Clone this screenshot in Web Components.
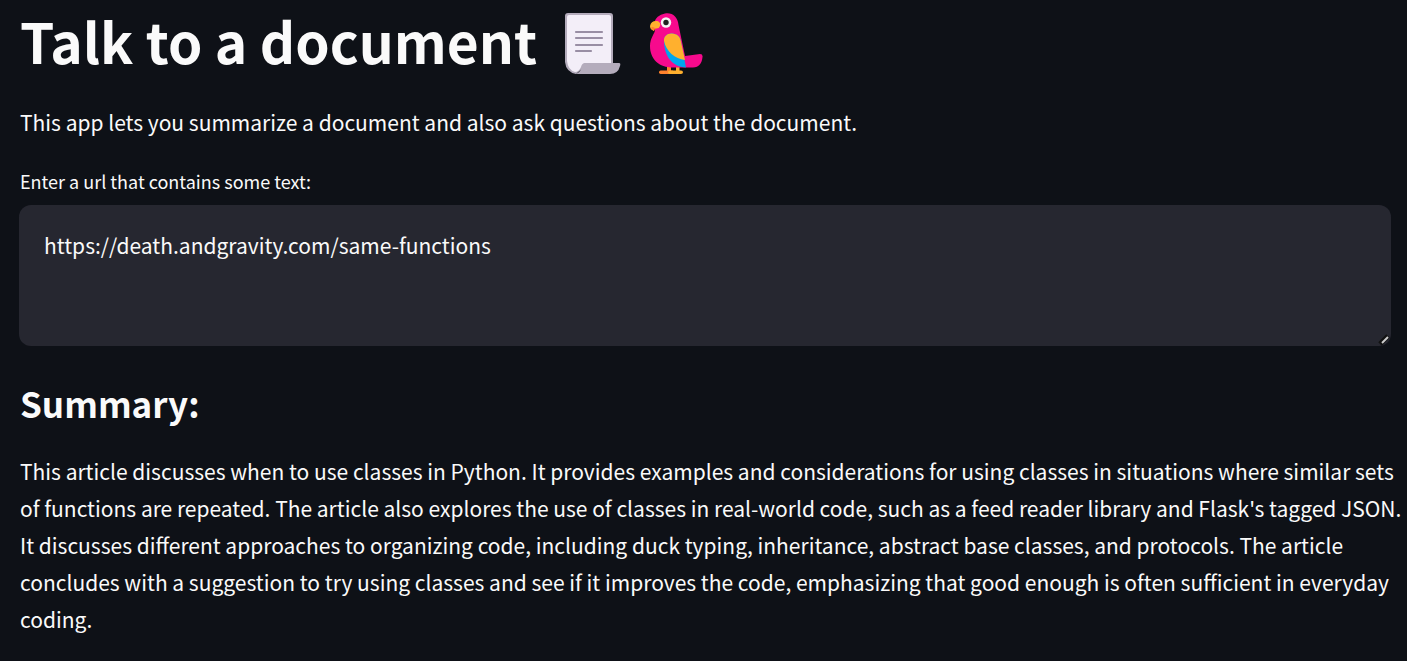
<!DOCTYPE html>
<html lang="en">
<head>
<meta charset="utf-8">
<meta name="viewport" content="width=device-width, initial-scale=1">
<title>Talk to a document</title>
<style>
html { background: #0e1117; color-scheme: dark; }
body { margin: 0; color: #fafafa; font: 400 21px/37px "Source Sans Pro", "Noto Sans CJK SC", "Noto Sans", sans-serif; }
</style>
</head>
<body>
<doc-app>
  <doc-title slot="title">Talk to a document<scroll-icon slot="icons"></scroll-icon><parrot-icon slot="icons"></parrot-icon></doc-title>
  <doc-text>This app lets you summarize a document and also ask questions about the document.</doc-text>
  <url-field label="Enter a url that contains some text:" value="https://death.andgravity.com/same-functions"></url-field>
  <doc-section heading="Summary:">
    <doc-text>This article discusses when to use classes in Python. It provides examples and considerations for using classes in situations where similar sets of functions are repeated. The article also explores the use of classes in real-world code, such as a feed reader library and Flask's tagged JSON. It discusses different approaches to organizing code, including duck typing, inheritance, abstract base classes, and protocols. The article concludes with a suggestion to try using classes and see if it improves the code, emphasizing that good enough is often sufficient in everyday coding.</doc-text>
  </doc-section>
</doc-app>
<script>
const define = (name, html, setup) => customElements.define(name, class extends HTMLElement {
  constructor() {
    super();
    this.attachShadow({ mode: "open" }).innerHTML = html;
  }
  connectedCallback() { if (setup) setup(this, this.shadowRoot); }
});

define("doc-app", `
<style>
:host { display: block; }
main { padding: 8px 16px 20px 19px; }
</style>
<main><slot name="title"></slot><slot></slot></main>`);

define("doc-title", `
<style>
:host { display: block; margin-bottom: 24px; }
h1 { display: flex; align-items: flex-start; min-height: 72px; margin: 0; padding-left: 1px; font-size: 55px; line-height: 64px; font-weight: 700; }
.icons { display: flex; align-self: center; gap: 28px; margin-left: 27px; }
</style>
<h1><span><slot></slot></span><span class="icons"><slot name="icons"></slot></span></h1>`);

define("scroll-icon", `
<style>:host { display: block; } svg { display: block; }</style>
<svg width="58" height="62" viewBox="0 0 58 62" aria-hidden="true">
  <path d="M4 0H46Q49 0 49 3V54H20L12 61Q2 59 1 49V3Q1 0 4 0Z" fill="#b4acbc"/>
  <path d="M5 2H45Q47 2 47 4V50H21Q18 50 17 54Q15 59 11 59Q4 57 3 48V4Q3 2 5 2Z" fill="#f3eef8"/>
  <path d="M22 50H55Q57 50 56 53Q54 61 46 61H11Q16 60 18 54Q19 50 22 50Z" fill="#b4acbc"/>
  <path d="M12 19H38M12 25H38M12 32H38M12 38H27" stroke="#998ea4" stroke-width="2.2" stroke-linecap="round"/>
</svg>`);

define("parrot-icon", `
<style>:host { display: block; } svg { display: block; }</style>
<svg width="54" height="62" viewBox="0 0 54 62" aria-hidden="true">
  <path d="M17 52H21V58H17Z" fill="#ff822d"/>
  <rect x="9" y="57.5" width="15" height="3.5" rx="1.7" fill="#ff822d"/>
  <path d="M26 52H29.500V57.500H31Q33 57.500 33 59.300Q33 61 31 61H20Q18 61 18 59.300Q18 57.500 20 57.500H26Z" fill="#ffb02e"/>
  <path d="M15 0.500C22 -1 28 4 28.500 12L35 43L50 41Q53 41 52.500 44C52 50 49 54.500 43 54.500H23C9 54.500 0 46 0 33C0 25 5 20 5 17L4 10Q6 2 15 0.500Z" fill="#f70a8d"/>
  <path d="M14 27C14 23 18 20 22 20.500C27 21 30 23 31 29L36 54.500C22 54 14 43 14 27Z" fill="#00a6ed"/>
  <path d="M14 27C14 23 18 20 22 20.500C27 21 30 23 31 29L35 47C25 46 16 38 14 28Z" fill="#ffb02e"/>
  <circle cx="16" cy="9.500" r="5.200" fill="#f4f4f4"/><circle cx="16" cy="9.500" r="2.700" fill="#212121"/>
  <path d="M6 8C9 8 11 10 10 13Q9 16 5.500 15.500Q4 16 4 18C1 17 0 15 0 13Q1 8 6 8Z" fill="#ffb02e"/>
  <path d="M1 15Q2 13 5.500 15.500Q4 16 4 18Q2 17 1 15Z" fill="#ff822d"/>
</svg>`);

define("doc-text", `
<style>:host { display: block; } p { margin: 0 -12px 0 0; padding-left: 1px; }</style>
<p><slot></slot></p>`);

define("url-field", `
<style>
:host { display: block; margin-top: 24px; }
label { display: block; padding-left: 1px; font-size: 18px; line-height: 32px; margin-bottom: 8px; }
textarea { display: block; box-sizing: border-box; width: 100%; height: 141px; margin: 0; padding: 22px 25px; border: 0; border-radius: 12px; outline: 0; resize: vertical; background: #262730; color: #fafafa; font: inherit; font-size: 21px; line-height: 37px; }
textarea::-webkit-resizer { background: url("data:image/svg+xml,%3Csvg xmlns='http://www.w3.org/2000/svg' width='15' height='15'%3E%3Cpath d='M4 13L12 5' stroke='%23111' stroke-width='5'/%3E%3Cpath d='M6 12L12 6' stroke='%23ccc' stroke-width='2'/%3E%3C/svg%3E") right bottom no-repeat; }
</style>
<label for="url"></label><textarea id="url" spellcheck="false"></textarea>`, (host, root) => {
  root.querySelector("label").textContent = host.getAttribute("label");
  root.querySelector("textarea").value = host.getAttribute("value");
});

define("doc-section", `
<style>
:host { display: block; margin-top: 33px; }
h2 { margin: 0 0 26px; padding-left: 1px; font-size: 35px; line-height: 48px; font-weight: 700; }
</style>
<section><h2></h2><slot></slot></section>`, (host, root) => {
  root.querySelector("h2").textContent = host.getAttribute("heading");
});
</script>
</body>
</html>
